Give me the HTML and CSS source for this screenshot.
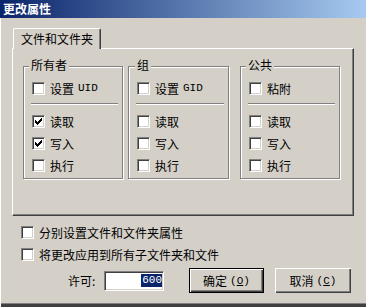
FILE: index.html
```html
<!DOCTYPE html>
<html lang="zh-CN">
<head>
<meta charset="utf-8">
<title>更改属性</title>
<link rel="stylesheet" href="styles.css">
</head>
<body>
    <div class="TitleBar">更改属性</div>
    <div class="Client">
        <div class="TabStrip">
            <div class="Tab">文件和文件夹</div>
        </div>
        <div class="TabPanel">
            <div class="Group Owner">
                <span class="Legend">所有者</span>
                <div class="Row"><span class="Box"></span>设置 <span class="Asc">UID</span></div>
                <div class="Sep"></div>
                <div class="Row"><span class="Box Checked"><svg width="7" height="7" viewBox="0 0 7 7"><path d="M0 2h1v3h-1z M1 3h1v3h-1z M2 4h1v3h-1z M3 3h1v3h-1z M4 2h1v3h-1z M5 1h1v3h-1z M6 0h1v3h-1z"/></svg></span>读取</div>
                <div class="Row"><span class="Box Checked"><svg width="7" height="7" viewBox="0 0 7 7"><path d="M0 2h1v3h-1z M1 3h1v3h-1z M2 4h1v3h-1z M3 3h1v3h-1z M4 2h1v3h-1z M5 1h1v3h-1z M6 0h1v3h-1z"/></svg></span>写入</div>
                <div class="Row"><span class="Box"></span>执行</div>
            </div>
            <div class="Group GroupGid">
                <span class="Legend">组</span>
                <div class="Row"><span class="Box"></span>设置 <span class="Asc">GID</span></div>
                <div class="Sep"></div>
                <div class="Row"><span class="Box"></span>读取</div>
                <div class="Row"><span class="Box"></span>写入</div>
                <div class="Row"><span class="Box"></span>执行</div>
            </div>
            <div class="Group Public">
                <span class="Legend">公共</span>
                <div class="Row"><span class="Box"></span>粘附</div>
                <div class="Sep"></div>
                <div class="Row"><span class="Box"></span>读取</div>
                <div class="Row"><span class="Box"></span>写入</div>
                <div class="Row"><span class="Box"></span>执行</div>
            </div>
        </div>
        <div class="Row Option First"><span class="Box"></span>分别设置文件和文件夹属性</div>
        <div class="Row Option"><span class="Box"></span>将更改应用到所有子文件夹和文件</div>
        <div class="Actions">
            <span class="PermitLabel">许可:</span>
            <div class="Edit"><span class="Selected">600</span></div>
            <div class="Button Default">确定 <span class="Asc">(<u>O</u>)</span></div>
            <div class="Button Cancel">取消 <span class="Asc">(<u>C</u>)</span></div>
        </div>
    </div>
</body>
</html>
```

FILE: styles.css
```css
body {
    margin: 0px;
    width: 366px;
    height: 307px;
    overflow: hidden;
    background-color: #D4D0C8;
    font-family: "Noto Sans CJK SC", "Liberation Sans", sans-serif;
    font-size: 12px;
    color: #000;
    box-shadow: inset 1px 0 #FFF, inset 0 -3px #404040, inset 0 -4px #808080;
}

.TitleBar {
    height: 18px;
    line-height: 18px;
    padding-left: 3px;
    color: #FFF;
    font-weight: bold;
    background: linear-gradient(to right, #0A246A, #A6CAF0);
}

.Client {
    padding: 10px 12px 0px 12px;
}

.TabStrip {
    display: flex;
    padding-left: 1px;
}

.Tab {
    position: relative;
    z-index: 1;
    width: 88px;
    height: 20px;
    line-height: 19px;
    padding-left: 7px;
    box-sizing: border-box;
    margin-bottom: -1px;
    background-color: #D4D0C8;
    border-top: 1px solid #FFF;
    border-left: 1px solid #FFF;
    border-right: 1px solid #404040;
    border-radius: 2px 2px 0 0;
    box-shadow: inset -1px 0 #808080;
    height: 21px;
}

.TabPanel {
    display: flex;
    align-items: flex-start;
    width: 342px;
    height: 168px;
    box-sizing: border-box;
    padding: 17px 0px 0px 10px;
    border-top: 1px solid #FFF;
    border-left: 1px solid #FFF;
    border-right: 1px solid #404040;
    border-bottom: 1px solid #404040;
    box-shadow: inset -1px -1px #808080;
}

.Group {
    position: relative;
    box-sizing: border-box;
    padding: 15px 4px 6px 8px;
    border: 1px solid #808080;
    box-shadow: inset 1px 1px #FFF, 1px 1px #FFF;
}

.Owner {
    width: 100px;
}

.GroupGid {
    width: 101px;
    margin-left: 5px;
}

.Public {
    width: 100px;
    margin-left: 11px;
}

.Legend {
    position: absolute;
    top: -9px;
    left: 5px;
    padding: 0px 2px;
    line-height: 14px;
    background-color: #D4D0C8;
}

.GroupGid .Legend {
    left: 6px;
}

.Row {
    display: flex;
    align-items: center;
    height: 13px;
    line-height: 13px;
    white-space: nowrap;
}

.Row + .Row {
    margin-top: 9px;
}

.Box {
    flex: none;
    display: flex;
    align-items: center;
    justify-content: center;
    width: 13px;
    height: 13px;
    box-sizing: border-box;
    margin-right: 5px;
    background-color: #FFF;
    border: 1px solid;
    border-color: #808080 #FFF #FFF #808080;
    box-shadow: inset 1px 1px #404040, inset -1px -1px #D4D0C8;
}

.Box svg {
    display: block;
    shape-rendering: crispEdges;
}

.Asc {
    font-family: "Liberation Mono", monospace;
    font-size: 11px;
    margin-left: 4px;
}

.Sep {
    height: 0px;
    margin: 8px 0px 10px -1px;
    border-top: 1px solid #808080;
    border-bottom: 1px solid #FFF;
}

.Option {
    padding-left: 9px;
}

.Option .Box {
    margin-right: 5px;
}

.Option.First {
    margin-top: 10px;
}

.Actions {
    display: flex;
    align-items: center;
    height: 25px;
    margin-top: 7px;
}

.PermitLabel {
    width: 36px;
    margin-left: 56px;
}

.Edit {
    display: flex;
    align-items: center;
    justify-content: flex-end;
    width: 60px;
    height: 20px;
    box-sizing: border-box;
    padding-right: 1px;
    background-color: #FFF;
    border: 1px solid;
    border-color: #808080 #FFF #FFF #808080;
    box-shadow: inset 1px 1px #404040, inset -1px -1px #D4D0C8;
}

.Selected {
    font-family: "Liberation Mono", monospace;
    font-size: 11px;
    line-height: 13px;
    padding: 0px 0px 0px 1px;
    color: #FFF;
    background-color: #0A246A;
}

.Button {
    display: flex;
    align-items: center;
    justify-content: center;
    height: 25px;
    box-sizing: border-box;
    white-space: nowrap;
}

.Button .Asc {
    margin-left: 3px;
}

.Default {
    width: 75px;
    margin-left: 25px;
    border: 1px solid #000;
    box-shadow: inset 1px 1px #FFF, inset -1px -1px #404040, inset -2px -2px #808080;
}

.Cancel {
    width: 76px;
    margin-left: 11px;
    box-shadow: inset 1px 1px #FFF, inset -1px -1px #404040, inset -2px -2px #808080;
}
```
